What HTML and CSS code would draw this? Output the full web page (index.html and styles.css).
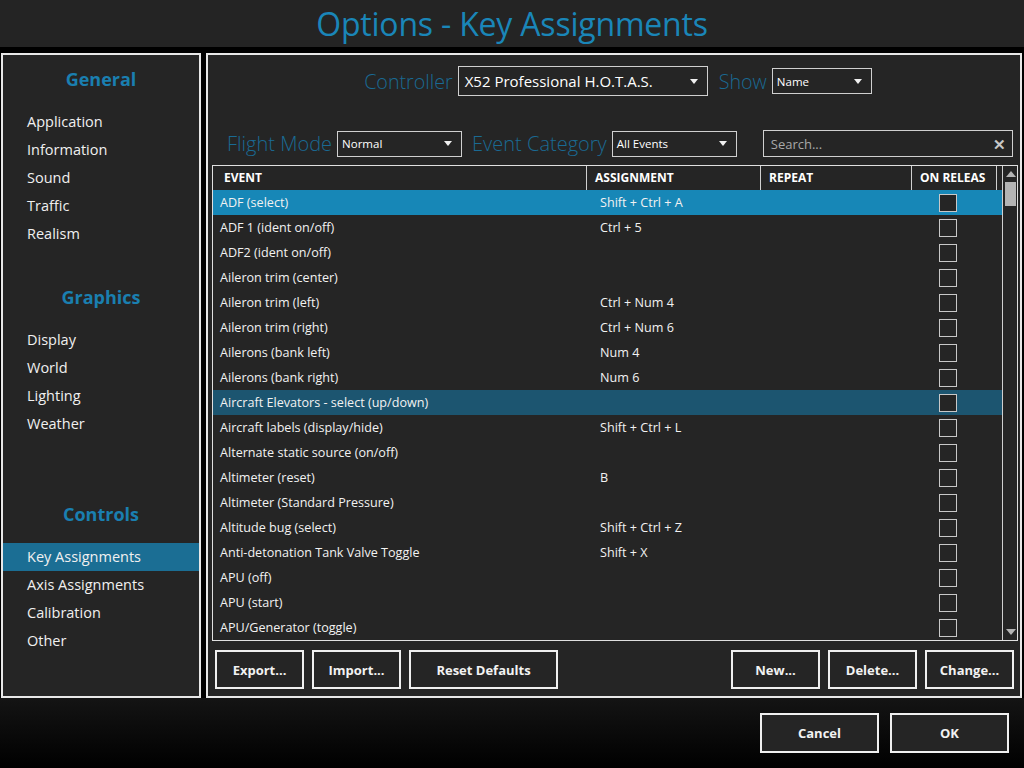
FILE: index.html
```html
<!DOCTYPE html>
<html lang="en">
<head>
    <meta charset="UTF-8">
    <title>Options - Key Assignments</title>
    <link rel="stylesheet" href="styles.css">
</head>
<body>
    <header class="title-bar">Options - Key Assignments</header>

    <div class="content">
        <nav class="side-panel">
            <h2 class="side-heading">General</h2>
            <ul class="side-list">
                <li>Application</li>
                <li>Information</li>
                <li>Sound</li>
                <li>Traffic</li>
                <li>Realism</li>
            </ul>
            <h2 class="side-heading">Graphics</h2>
            <ul class="side-list">
                <li>Display</li>
                <li>World</li>
                <li>Lighting</li>
                <li>Weather</li>
            </ul>
            <h2 class="side-heading controls-heading">Controls</h2>
            <ul class="side-list">
                <li class="active">Key Assignments</li>
                <li>Axis Assignments</li>
                <li>Calibration</li>
                <li>Other</li>
            </ul>
        </nav>

        <main class="main-panel">
            <div class="filter-row top-row">
                <label class="field-label">Controller</label>
                <div class="dropdown controller-select"><span>X52 Professional H.O.T.A.S.</span><i class="caret"></i></div>
                <label class="field-label">Show</label>
                <div class="dropdown small show-select"><span>Name</span><i class="caret"></i></div>
            </div>

            <div class="filter-row second-row">
                <label class="field-label">Flight Mode</label>
                <div class="dropdown small mode-select"><span>Normal</span><i class="caret"></i></div>
                <label class="field-label">Event Category</label>
                <div class="dropdown small category-select"><span>All Events</span><i class="caret"></i></div>
                <div class="search-box"><span>Search...</span><span class="clear">&#x2715;</span></div>
            </div>

            <div class="event-table">
                <div class="table-body">
                    <div class="table-head">
                        <div class="th">EVENT</div>
                        <div class="th">ASSIGNMENT</div>
                        <div class="th">REPEAT</div>
                        <div class="th last">ON RELEAS</div>
                    </div>
                    <div id="rows"></div>
                </div>
                <div class="scrollbar">
                    <i class="arrow up"></i>
                    <div class="thumb"></div>
                    <i class="arrow down"></i>
                </div>
            </div>

            <div class="action-row">
                <button class="btn w88">Export...</button>
                <button class="btn w88">Import...</button>
                <button class="btn w148">Reset Defaults</button>
                <span class="spacer"></span>
                <button class="btn w88">New...</button>
                <button class="btn w88">Delete...</button>
                <button class="btn w88">Change...</button>
            </div>
        </main>
    </div>

    <footer class="footer">
        <button class="btn dialog-btn">Cancel</button>
        <button class="btn dialog-btn">OK</button>
    </footer>

    <script>
        // Visible rows of the key assignment list
        const events = [
            ['ADF (select)', 'Shift + Ctrl + A', 'selected'],
            ['ADF 1 (ident on/off)', 'Ctrl + 5'],
            ['ADF2 (ident on/off)', ''],
            ['Aileron trim (center)', ''],
            ['Aileron trim (left)', 'Ctrl + Num 4'],
            ['Aileron trim (right)', 'Ctrl + Num 6'],
            ['Ailerons (bank left)', 'Num 4'],
            ['Ailerons (bank right)', 'Num 6'],
            ['Aircraft Elevators - select (up/down)', '', 'hover'],
            ['Aircraft labels (display/hide)', 'Shift + Ctrl + L'],
            ['Alternate static source (on/off)', ''],
            ['Altimeter (reset)', 'B'],
            ['Altimeter (Standard Pressure)', ''],
            ['Altitude bug (select)', 'Shift + Ctrl + Z'],
            ['Anti-detonation Tank Valve Toggle', 'Shift + X'],
            ['APU (off)', ''],
            ['APU (start)', ''],
            ['APU/Generator (toggle)', '']
        ];

        const rows = document.getElementById('rows');
        events.forEach(ev => {
            const row = document.createElement('div');
            row.className = 'row' + (ev[2] ? ' ' + ev[2] : '');
            row.innerHTML = '<div class="td">' + ev[0] + '</div>' +
                '<div class="td assign">' + ev[1] + '</div>' +
                '<div class="td"></div>' +
                '<div class="td check-cell"><span class="checkbox"></span></div>';
            rows.appendChild(row);
        });
    </script>
</body>
</html>
```

FILE: styles.css
```css
* {
    box-sizing: border-box;
}
body {
    margin: 0;
    width: 1024px;
    height: 768px;
    overflow: hidden;
    background: #000;
    color: #f0f0f0;
    font-family: "Open Sans", "Noto Sans", sans-serif;
}
.title-bar {
    height: 47px;
    background: #242424;
    color: #1a86b8;
    font-size: 32px;
    text-align: center;
    line-height: 47px;
    letter-spacing: -0.2px;
}
.content {
    display: flex;
    gap: 5px;
    padding: 6px 2px 0 1px;
    height: 651px;
}
.side-panel {
    width: 201px;
    height: 645px;
    border: 2px solid #e8e8e8;
    background: #252525;
    padding-top: 12px;
}
.side-heading {
    margin: 0;
    text-align: center;
    color: #1a7fb0;
    font-size: 18px;
    font-weight: bold;
    height: 24px;
    line-height: 24px;
}
.side-list {
    list-style: none;
    margin: 17px 0 0;
    padding: 0;
}
.side-list li {
    height: 28px;
    line-height: 27px;
    padding-left: 24px;
    font-size: 14.5px;
}
.side-list li.active {
    background: #1b6e94;
}
.side-list + .side-heading {
    margin-top: 37px;
}
.side-list + .controls-heading {
    margin-top: 64px;
}
.main-panel {
    flex: 1;
    height: 645px;
    border: 2px solid #e8e8e8;
    background: #252525;
    padding: 0 2px 0 4px;
    display: flex;
    flex-direction: column;
}
.filter-row {
    display: flex;
    align-items: center;
}
.top-row {
    justify-content: center;
    padding-left: 6px;
    margin-top: 11px;
    height: 30px;
}
.second-row {
    margin-top: 34px;
    height: 27px;
    padding-left: 15px;
}
.field-label {
    color: #1a6a93;
    font-size: 19.7px;
    font-weight: 300;
    margin-right: 5px;
}
.second-row .field-label {
    font-size: 20px;
}
.dropdown {
    border: 1px solid #d0d0d0;
    display: flex;
    align-items: center;
    justify-content: space-between;
    padding: 0 9px 0 6px;
    font-size: 15px;
    color: #fff;
}
.dropdown.small {
    font-size: 11.5px;
    padding-left: 4px;
}
.controller-select {
    width: 250px;
    height: 30px;
    margin-right: 11px;
}
.show-select {
    width: 100px;
    height: 26px;
}
.mode-select {
    width: 125px;
    height: 26px;
    margin-right: 10px;
}
.category-select {
    width: 125px;
    height: 26px;
}
.caret {
    width: 0;
    height: 0;
    border-left: 4px solid transparent;
    border-right: 4px solid transparent;
    border-top: 5px solid #f0f0f0;
}
.search-box {
    margin-left: 26px;
    width: 250px;
    height: 27px;
    border: 1px solid #d0d0d0;
    display: flex;
    align-items: center;
    justify-content: space-between;
    padding: 0 6px 0 7px;
    font-size: 13px;
    color: #a8a8a8;
}
.search-box .clear {
    font-size: 15px;
    color: #c8c8c8;
    font-weight: bold;
}
.event-table {
    margin-top: 8px;
    width: 806px;
    height: 476px;
    border: 1px solid #e0e0e0;
    display: flex;
}
.table-body {
    width: 789px;
    overflow: hidden;
}
.table-head {
    display: grid;
    grid-template-columns: 373px 174px 151px 86px;
    height: 24px;
}
.th {
    font-size: 12px;
    font-weight: bold;
    color: #fff;
    line-height: 24px;
    padding-left: 8px;
    border-left: 1px solid #d0d0d0;
    white-space: nowrap;
    overflow: hidden;
}
.th:first-child {
    border-left: none;
    padding-left: 11px;
}
.th.last {
    border-right: 1px solid #d0d0d0;
}
.row {
    display: grid;
    grid-template-columns: 373px 174px 151px 91px;
    height: 25px;
    align-items: center;
    font-size: 12.6px;
    color: #f2f2f2;
}
.row.selected {
    background: #1787b7;
}
.row.hover {
    background: #1c5570;
}
.td {
    padding-left: 7px;
    white-space: nowrap;
}
.td.assign {
    padding-left: 14px;
}
.check-cell {
    padding-left: 28px;
    display: flex;
    align-items: center;
}
.checkbox {
    display: block;
    width: 18px;
    height: 18px;
    border: 1.5px solid #c8c8c8;
    background: #252525;
}
.scrollbar {
    width: 15px;
    position: relative;
    border-left: 1px solid #d0d0d0;
}
.thumb {
    position: absolute;
    top: 16px;
    left: 2px;
    width: 11px;
    height: 24px;
    background: #b4b4b4;
}
.arrow {
    position: absolute;
    left: 3px;
    width: 0;
    height: 0;
    border-left: 5px solid transparent;
    border-right: 5px solid transparent;
}
.arrow.up {
    top: 5px;
    border-bottom: 6px solid #b4b4b4;
}
.arrow.down {
    bottom: 5px;
    border-top: 6px solid #b4b4b4;
}
.action-row {
    display: flex;
    gap: 8px;
    margin-top: 9px;
    padding-left: 3px;
    padding-right: 4px;
}
.spacer {
    flex: 1;
}
.btn {
    flex-shrink: 0;
    height: 39px;
    background: #252525;
    border: 2px solid #f0f0f0;
    color: #f2f2f2;
    font-family: "Open Sans", "Noto Sans", sans-serif;
    font-size: 13px;
    font-weight: bold;
    padding: 0;
}
.w88 {
    width: 89px;
}
.w148 {
    width: 149px;
}
.footer {
    height: 70px;
    background: linear-gradient(180deg, #141414, #000);
    display: flex;
    justify-content: flex-end;
    align-items: flex-start;
    gap: 11px;
    padding: 15px 15px 0 0;
}
.dialog-btn {
    width: 119px;
    height: 40px;
}
```
